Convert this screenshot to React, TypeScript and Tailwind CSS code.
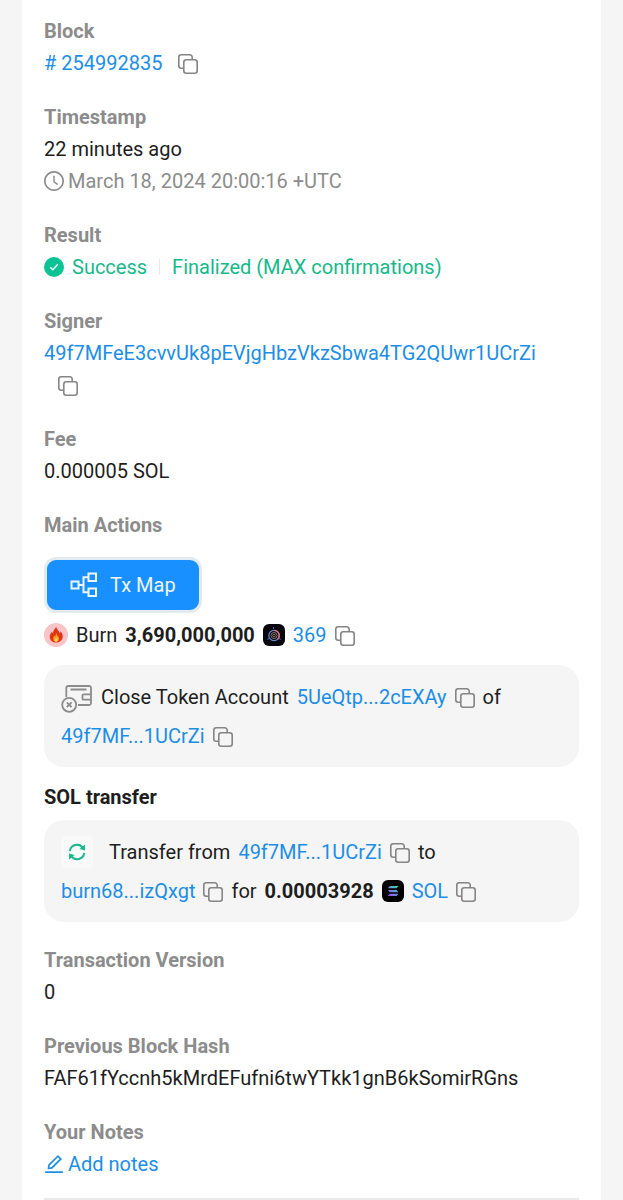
import type { ReactNode } from "react";
import { AiOutlineClockCircle, AiOutlineEdit } from "react-icons/ai";

export default function App() {
  return (
    <div className="flex min-h-screen flex-col bg-[#f5f5f5] px-[22px] font-['Roboto',sans-serif] text-xl leading-8 text-[#1e1e1e]">
      <main className="grow bg-white px-[22px] pt-[15px]">
        <div className="flex flex-col gap-[22px] border-b-2 border-[#eaeaea] pb-[18px]">
          <Field label="Block">
            <div className="flex items-center gap-4">
              <Address># 254992835</Address>
              <CopyButton />
            </div>
          </Field>

          <Field label="Timestamp">
            <p>22 minutes ago</p>
            <p className="flex items-center gap-1 text-[#8c8c8c]">
              <AiOutlineClockCircle viewBox="64 64 896 896" className="size-5 shrink-0" />
              March 18, 2024 20:00:16 +UTC
            </p>
          </Field>

          <Field label="Result">
            <div className="flex items-center text-[#16b98a]">
              <SuccessIcon />
              <span className="ml-2">Success</span>
              <span className="mx-3 h-4 w-px bg-[#e8e8e8]" />
              <span>Finalized (MAX confirmations)</span>
            </div>
          </Field>

          <Field label="Signer">
            <div className="flex flex-wrap items-center">
              <Address>49f7MFeE3cvvUk8pEVjgHbzVkzSbwa4TG2QUwr1UCrZi</Address>
              <span className="flex h-8 basis-full items-center pl-[14px]">
                <CopyButton />
              </span>
            </div>
          </Field>

          <Field label="Fee">
            <p>0.000005 SOL</p>
          </Field>

          <Field label="Main Actions">
            <button
              type="button"
              className="mt-4 mb-[6px] flex h-14 items-center gap-3 rounded-xl border-[3px] border-[#e3eaf0] bg-[#1890ff] px-[23px] text-[#edf6ff]"
            >
              <MapIcon />
              Tx Map
            </button>
            <div className="flex items-center gap-2">
              <BurnIcon />
              <span>Burn</span>
              <b className="font-bold">3,690,000,000</b>
              <TokenIcon />
              <Address>369</Address>
              <CopyButton />
            </div>

            <Card>
              <CardRow>
                <CloseAccountIcon />
                <span>Close Token Account</span>
                <Address>5UeQtp...2cEXAy</Address>
                <CopyButton />
                <span>of</span>
              </CardRow>
              <CardRow>
                <Address>49f7MF...1UCrZi</Address>
                <CopyButton />
              </CardRow>
            </Card>

            <h3 className="mt-[14px] -mb-[7px] font-bold">SOL transfer</h3>
            <Card>
              <CardRow>
                <span className="mr-2 flex size-8 items-center justify-center rounded bg-[#f9f9f9]">
                  <TransferIcon />
                </span>
                <span>Transfer from</span>
                <Address>49f7MF...1UCrZi</Address>
                <CopyButton />
                <span>to</span>
              </CardRow>
              <CardRow>
                <Address>burn68...izQxgt</Address>
                <CopyButton />
                <span>for</span>
                <b className="font-bold">0.00003928</b>
                <SolIcon />
                <Address>SOL</Address>
                <CopyButton />
              </CardRow>
            </Card>
          </Field>

          <Field label="Transaction Version">
            <p>0</p>
          </Field>

          <Field label="Previous Block Hash">
            <p>FAF61fYccnh5kMrdEFufni6twYTkk1gnB6kSomirRGns</p>
          </Field>

          <Field label="Your Notes">
            <a href="#notes" className="flex items-center gap-1 text-[#1c8ee6]">
              <AiOutlineEdit viewBox="64 64 896 896" className="size-5" />
              Add notes
            </a>
          </Field>
        </div>
      </main>
    </div>
  );
}

function Field({ label, children }: { label: string; children: ReactNode }) {
  return (
    <section>
      <h2 className="font-bold text-[#8c8c8c]">{label}</h2>
      {children}
    </section>
  );
}

function Card({ children }: { children: ReactNode }) {
  return <div className="mt-[14px] rounded-[20px] bg-[#f5f5f5] px-[17px] py-3">{children}</div>;
}

function CardRow({ children }: { children: ReactNode }) {
  return <div className="flex min-h-[39px] flex-wrap items-center gap-x-2">{children}</div>;
}

function Address({ children }: { children: ReactNode }) {
  return (
    <a href="#address" className="text-[#1c8ee6]">
      {children}
    </a>
  );
}

function CopyButton() {
  return (
    <button type="button" aria-label="Copy" className="mt-0.5 shrink-0">
      <svg viewBox="0 0 20 20" className="size-5" fill="none" stroke="#858585" strokeWidth="1.6">
        <path d="M5.800 14.200H3.200A2.400 2.400 0 0 1 .8 11.800V3.200A2.400 2.400 0 0 1 3.200.8h8.600a2.400 2.400 0 0 1 2.400 2.400v2.600" />
        <rect x="5.800" y="5.800" width="13.400" height="13.400" rx="2.400" />
      </svg>
    </button>
  );
}

function SuccessIcon() {
  return (
    <svg viewBox="0 0 20 20" className="size-5" fill="none">
      <circle cx="10" cy="10" r="10" fill="#0cc395" />
      <path d="M6.200 10.200l2.600 2.600 5-5.600" stroke="#fff" strokeWidth="1.4" />
    </svg>
  );
}

function MapIcon() {
  return (
    <svg viewBox="0 0 28 26" className="size-7" fill="none" stroke="#edf6ff" strokeWidth="2">
      <rect x="1.5" y="9.5" width="7" height="7" />
      <rect x="18.5" y="1.5" width="7.5" height="7.5" />
      <rect x="18.5" y="16.5" width="7.5" height="7.5" />
      <path d="M8.500 13h5M18.500 5.200h-5v15h5" />
    </svg>
  );
}

function BurnIcon() {
  return (
    <svg viewBox="0 0 24 24" className="size-6">
      <circle cx="12" cy="12" r="12" fill="#f7c5c8" />
      <path
        d="M12.200 4c.5 2.500 3 3.800 3.600 6.200.5-.5.7-1.100.7-1.900 1.500 1.700 2.500 3.800 2.200 6-.4 3.200-3.200 5.300-6.500 5.300-3.600 0-6.300-2.300-6.400-5.600-.1-2.300 1.100-4 2.300-5.500.1 1 .3 1.600.8 2.100C9.100 8 10.500 6 12.200 4z"
        fill="#df3512"
      />
      <path
        d="M12.500 10.300c.1 1.800 2.500 3 2.500 5.200 0 2-1.200 3.300-2.900 3.300s-2.900-1.300-2.900-3.100c0-1.500.8-2.300 1.400-3.100.2.700.4.900.8 1.200-.1-1.300.3-2.500 1.100-3.500z"
        fill="#ff9d20"
      />
      <path d="M12.200 14.500c.8.900 1.400 1.500 1.400 2.500s-.7 1.700-1.500 1.700-1.500-.7-1.500-1.600c0-1 .9-1.700 1.600-2.600z" fill="#ffd45a" />
    </svg>
  );
}

function TokenIcon() {
  return (
    <svg viewBox="0 0 22 22" className="size-[22px]" fill="none">
      <rect width="22" height="22" rx="6" fill="#07070d" />
      <circle cx="11" cy="11.500" r="5.200" stroke="#6b8bd4" strokeWidth="1.2" />
      <path d="M11 6.300a5.200 5.200 0 0 1 3.700 8.900" stroke="#e26a78" strokeWidth="1.3" />
      <path d="M10.500 5V3M6 14.500l-1.800 1M16 14.500l1.800 1" stroke="#4662c8" />
      <circle cx="11" cy="11.500" r="3" stroke="#a58b83" strokeWidth=".8" />
      <circle cx="11" cy="11.500" r="1.300" stroke="#a58b83" strokeWidth=".8" />
    </svg>
  );
}

function CloseAccountIcon() {
  return (
    <svg viewBox="0 0 32 28" className="mt-1 h-7 w-8" fill="none" stroke="#8c8c8c" strokeWidth="1.8">
      <path d="M5.300 12V3.200A2.200 2.200 0 0 1 7.500 1h20.700A1.800 1.800 0 0 1 30 2.800v15.400a1.800 1.800 0 0 1-1.800 1.800H17" />
      <path d="M9.500 4.500h16M30 9.300h-7.500a1 1 0 0 0-1 1v3.400a1 1 0 0 0 1 1H30" />
      <circle cx="8.200" cy="19.800" r="7" />
      <path d="M5.800 17.400l4.800 4.800M10.600 17.400l-4.800 4.800" strokeWidth="1.9" />
    </svg>
  );
}

function TransferIcon() {
  return (
    <svg viewBox="0 0 18 18" className="size-[18px]" fill="none" stroke="#16b98a" strokeWidth="2">
      <path d="M1.800 8.200A7.200 7.200 0 0 1 14.800 4.800M16.200 9.800A7.200 7.200 0 0 1 3.200 13.200" />
      <path d="M17 1.500v6l-5.500-1.500zM1 16.500v-6l5.500 1.500z" fill="#16b98a" stroke="none" />
    </svg>
  );
}

function SolIcon() {
  return (
    <svg viewBox="0 0 22 22" className="size-[22px]">
      <defs>
        <linearGradient id="sol" x1="6" y1="16" x2="16" y2="6" gradientUnits="userSpaceOnUse">
          <stop stopColor="#a044f0" />
          <stop offset=".5" stopColor="#6f8be0" />
          <stop offset="1" stopColor="#22e6a8" />
        </linearGradient>
      </defs>
      <rect width="22" height="22" rx="6" fill="#000" />
      <path
        d="M7.800 6h8.700l-2 2.300H5.800zM5.800 9.900h8.700l2 2.300H7.800zM7.800 13.800h8.700l-2 2.300H5.800z"
        fill="url(#sol)"
      />
    </svg>
  );
}
